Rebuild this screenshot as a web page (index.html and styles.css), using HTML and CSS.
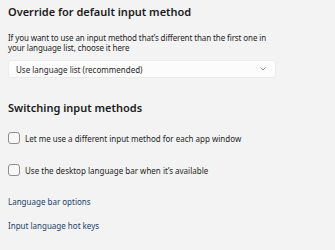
FILE: index.html
```html
<!DOCTYPE html>
<html lang="en">
<head>
<meta charset="utf-8">
<link rel="stylesheet" href="styles.css">
</head>
<body>
<div class="page">
  <h2 class="title">Override for default input method</h2>
  <p class="desc">If you want to use an input method that’s different than the first one in your language list, choose it here</p>
  <div class="select">
    <span>Use language list (recommended)</span>
    <svg class="chev" width="6" height="4" viewBox="0 0 6 4"><path d="M0.5 0.5 L3 3 L5.5 0.5" fill="none" stroke="#8a8a8a" stroke-width="0.9"/></svg>
  </div>
  <h2 class="title title2">Switching input methods</h2>
  <label class="check"><span class="box"></span><span>Let me use a different input method for each app window</span></label>
  <label class="check check2"><span class="box"></span><span>Use the desktop language bar when it’s available</span></label>
  <a class="link first">Language bar options</a>
  <a class="link">Input language hot keys</a>
</div>
</body>
</html>
```

FILE: styles.css
```css
html, body {
  margin: 0;
  padding: 0;
  background: #f3f3f3;
}
body {
  font-family: "Noto Sans", "Open Sans", sans-serif;
  color: #1f1f1f;
  width: 335px;
  height: 250px;
  overflow: hidden;
}
.page {
  display: flex;
  flex-direction: column;
  align-items: flex-start;
  padding: 0 8px;
}
.title {
  margin: 5px 0 0;
  font-size: 11px;
  font-weight: 600;
  line-height: 14px;
  color: #1a1a1a;
}
.title2 {
  margin-top: 23px;
}
.desc {
  margin: 14px 0 0;
  font-size: 8px;
  line-height: 10px;
  letter-spacing: -0.1px;
  width: 272px;
}
.select {
  margin-top: 7px;
  width: 268px;
  height: 18px;
  box-sizing: border-box;
  background: #fcfcfc;
  border: 1px solid #ebebeb;
  border-radius: 3px;
  display: flex;
  align-items: center;
  justify-content: space-between;
  padding: 0 9px 0 7px;
  font-size: 8px;
  line-height: 11px;
}
.check {
  display: flex;
  align-items: center;
  gap: 5px;
  font-size: 8px;
  line-height: 11px;
  height: 12px;
  margin-top: 17px;
}
.check2 {
  margin-top: 20px;
}
.box {
  width: 12px;
  height: 12px;
  box-sizing: border-box;
  border: 1px solid #8f8f8f;
  border-radius: 3px;
  background: #f8f8f8;
}
.link {
  font-size: 8px;
  color: #20426a;
  line-height: 11px;
  margin-top: 13px;
}
.link.first {
  margin-top: 20px;
}
```
